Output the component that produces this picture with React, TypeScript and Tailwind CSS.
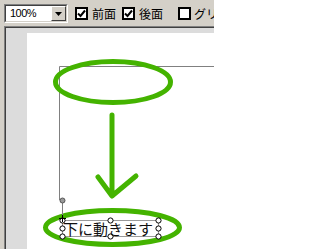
import React from "react";

const GREEN = "#44b300";

function CheckBox({ checked }: { checked: boolean }) {
  return (
    <div className="w-[13px] h-[13px] border-2 border-black bg-white flex items-center justify-center shrink-0">
      {checked && (
        <svg width="9" height="9" viewBox="0 0 9 9">
          <path d="M1 4.5 L3.5 7 L8 1.5" fill="none" stroke="#000" strokeWidth="2" />
        </svg>
      )}
    </div>
  );
}

function ZoomCombo() {
  return (
    <div className="w-[64px] h-[19px] shrink-0 border-t border-l border-[#808080] border-b border-r border-b-white border-r-white">
      <div className="h-full border-t border-l border-[#404040] border-b border-r border-b-[#d4d0c8] border-r-[#d4d0c8] bg-white flex items-center">
        <span className="flex-1 pl-[4px] text-[11px] leading-none tracking-[-0.5px] text-black font-['Liberation_Sans',sans-serif]">
          100%
        </span>
        <div className="w-[15px] h-[15px] bg-[#d4d0c8] border-t border-l border-white border-b border-r border-b-[#404040] border-r-[#404040] flex items-center justify-center">
          <svg width="7" height="4" viewBox="0 0 7 4">
            <path d="M0 0 H7 L3.5 4 Z" fill="#000" />
          </svg>
        </div>
      </div>
    </div>
  );
}

// selection handles around the text box (page coords)
const handles: [number, number][] = [
  [35, 187], [83, 187], [131, 187],
  [35, 195], [131, 195],
  [35, 203], [83, 203], [131, 203],
];

export default function App() {
  return (
    <div className="w-[214px] h-[249px] overflow-hidden bg-[#d4d0c8] font-['Noto_Sans_CJK_JP',sans-serif]">
      {/* toolbar */}
      <div className="h-[26px] w-[300px] flex items-start pt-[4px] pl-[4px]">
        <ZoomCombo />
        <div className="flex items-center h-[19px] ml-[7px] shrink-0 whitespace-nowrap">
          <CheckBox checked />
          <span className="ml-[4px] text-[12px] leading-none text-black">前面</span>
          <div className="ml-[6px]">
            <CheckBox checked />
          </div>
          <span className="ml-[4px] text-[12px] leading-none text-black">後面</span>
          <div className="ml-[15px]">
            <CheckBox checked={false} />
          </div>
          <span className="ml-[3px] text-[12px] leading-none text-black">グリッド</span>
        </div>
      </div>

      {/* canvas area */}
      <div className="ml-[4px] h-[223px] border-t border-l border-[#808080]">
        <div className="h-full border-t border-l border-[#404040] bg-[#dcdcdc] pl-[21px] pt-[5px]">
          <div className="relative w-full h-full bg-white">
            <svg
              className="absolute left-0 top-0"
              width="187"
              height="216"
              viewBox="0 0 187 216"
            >
              {/* page outline */}
              <path d="M32.5 167 V33.5 H187" fill="none" stroke="#808080" strokeWidth="1" />

              {/* top ellipse */}
              <ellipse cx="86" cy="49" rx="57.5" ry="20.5" fill="none" stroke={GREEN} strokeWidth="5" />

              {/* arrow */}
              <path
                d="M85 82 V162 M71 144 L85 163 L109 143"
                fill="none"
                stroke={GREEN}
                strokeWidth="5"
                strokeLinecap="round"
                strokeLinejoin="round"
              />

              {/* bottom ellipse */}
              <ellipse cx="85.5" cy="194.5" rx="67" ry="17" fill="none" stroke={GREEN} strokeWidth="5" />

              {/* selection box */}
              <rect x="35.5" y="187.5" width="96" height="16" fill="none" stroke="#9a9a9a" strokeWidth="1" />
              <path d="M35.5 170 V187" stroke="#808080" strokeWidth="1" />
              <circle cx="35.5" cy="167.5" r="2.5" fill="#9a9a9a" stroke="#555" strokeWidth="1" />
              {handles.map(([x, y], i) => (
                <circle key={i} cx={x + 0.5} cy={y + 0.5} r="2.6" fill="#fff" stroke="#000" strokeWidth="1" />
              ))}
              <path d="M32 185.5 H39 M35.5 182 V189" stroke="#000" strokeWidth="1" />
            </svg>
            <div className="absolute left-[36px] top-[187px] h-[16px] flex items-center text-[15px] leading-none text-[#111] whitespace-nowrap">
              下に動きます
            </div>
          </div>
        </div>
      </div>
    </div>
  );
}
